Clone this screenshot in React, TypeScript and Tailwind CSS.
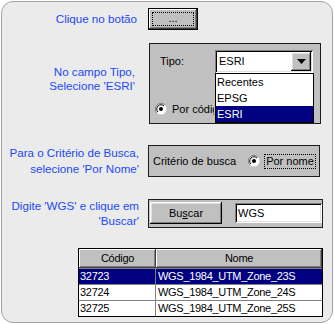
const raised =
  "bg-[#c0c0c0] shadow-[inset_-1px_-1px_0_#000,inset_1px_1px_0_#fff,inset_-2px_-2px_0_#808080,inset_2px_2px_0_#dfdfdf]"
const sunken =
  "bg-white shadow-[inset_1px_1px_0_#808080,inset_-1px_-1px_0_#fff,inset_2px_2px_0_#000,inset_-2px_-2px_0_#dfdfdf]"

function Radio() {
  return (
    <svg width="12" height="12" viewBox="0 0 12 12" className="shrink-0">
      <circle cx="6" cy="6" r="5.5" fill="#fff" />
      <path d="M10 2A5.5 5.5 0 0 0 2 10" fill="none" stroke="#808080" />
      <path d="M9 3A4.2 4.2 0 0 0 3 9" fill="none" stroke="#000" />
      <circle cx="6" cy="6" r="2" fill="#000" />
    </svg>
  )
}

export default function App() {
  return (
    <div className="w-[334px] h-[324px] bg-white p-px font-['Liberation_Sans',Arial,sans-serif] text-[11px] text-black">
      <div className="h-[322px] w-[332px] rounded-[12px] border border-[#a4a4a4] bg-[#ebebeb] pt-[6px]">
        {/* Step 1 */}
        <div className="flex items-center h-[22px]">
          <div className="w-[135px] text-right text-[11.6px] text-[#2049f5]">Clique no botão</div>
          <button className="ml-[11px] w-[50px] h-[22px] border border-black p-[3px] bg-[#c0c0c0] shadow-[inset_-1px_-1px_0_#404040,inset_1px_1px_0_#fff,inset_-2px_-2px_0_#808080]">
            <span className="flex h-full items-center justify-center border border-dotted border-black leading-none pb-[2px]">...</span>
          </button>
        </div>

        {/* Step 2 */}
        <div className="flex items-start mt-[13px]">
          <div className="w-[133px] pt-[22px] text-right text-[11.6px] leading-[14px] text-[#2049f5]">
            No campo Tipo,
            <br />
            Selecione 'ESRI'
          </div>
          <div className="relative ml-[14px] w-[172px] h-[81px] border border-[#1c1c1c] bg-[#c0c0c0]">
            <div className="flex items-center pt-[6px] pl-[10px]">
              <span className="w-[55px]">Tipo:</span>
              <div className={`flex w-[98px] h-[23px] items-center p-[2px] ${sunken}`}>
                <span className="flex-1 pl-[2px]">ESRI</span>
                <span className={`flex w-[20px] h-[19px] items-center justify-center ${raised}`}>
                  <svg width="9" height="5" viewBox="0 0 9 5">
                    <path d="M0 0h9L4.5 5z" fill="#000" />
                  </svg>
                </span>
              </div>
            </div>
            <div className="flex items-center gap-[5px] mt-[29px] pl-[5px] h-[14px]">
              <Radio />
              <span className="w-[42px] overflow-hidden whitespace-nowrap">Por código</span>
            </div>
            <div className="absolute left-[65px] top-[29px] z-10 w-[99px] border border-black bg-white">
              <div className="h-[16px] leading-[16px] pl-[1px]">Recentes</div>
              <div className="h-[16px] leading-[16px] pl-[1px]">EPSG</div>
              <div className="h-[16px] leading-[16px] pl-[1px] bg-[#000080] text-white">ESRI</div>
            </div>
          </div>
        </div>

        {/* Step 3 */}
        <div className="flex items-center mt-[21px]">
          <div className="w-[137px] text-right text-[11.6px] leading-[16px] text-[#2049f5]">
            Para o Critério de Busca,
            <br />
            selecione 'Por Nome'
          </div>
          <div className="flex items-center ml-[9px] w-[172px] h-[32px] border border-[#1c1c1c] bg-[#c0c0c0] pl-[4px]">
            <span>Critério de busca</span>
            <span className="ml-[12px]">
              <Radio />
            </span>
            <span className="ml-[4px] border border-dotted border-black px-[1px] leading-[13px]">Por nome</span>
          </div>
        </div>

        {/* Step 4 */}
        <div className="flex items-center mt-[21px]">
          <div className="w-[137px] text-right text-[11.6px] leading-[15px] text-[#2049f5]">
            Digite 'WGS' e clique em
            <br />
            'Buscar'
          </div>
          <div className="flex items-center ml-[9px] w-[175px] h-[29px] border border-[#1c1c1c] bg-[#c0c0c0] pl-px">
            <button className={`w-[72px] h-[22px] ${raised}`}>
              Bu<span className="underline">s</span>car
            </button>
            <div className={`ml-[13px] flex-1 h-[20px] leading-[20px] pl-[3px] ${sunken}`}>WGS</div>
          </div>
        </div>

        {/* Results */}
        <div className="mt-[20px] ml-[76px] w-[245px] border border-black bg-white tracking-[-0.3px]">
          <div className="flex h-[19px]">
            <div className="w-[77px] flex items-center justify-center bg-[#c0c0c0] shadow-[inset_-1px_-1px_0_#404040,inset_1px_1px_0_#fff,inset_-2px_-2px_0_#808080]">Código</div>
            <div className="flex-1 flex items-center justify-center bg-[#c0c0c0] shadow-[inset_-1px_-1px_0_#404040,inset_1px_1px_0_#fff,inset_-2px_-2px_0_#808080]">Nome</div>
          </div>
          {[
            ["32723", "WGS_1984_UTM_Zone_23S", true],
            ["32724", "WGS_1984_UTM_Zone_24S", false],
            ["32725", "WGS_1984_UTM_Zone_25S", false],
          ].map(([code, name, sel]) => (
            <div
              key={code as string}
              className={`flex h-[16px] leading-[15px] border-t border-[#808080] ${sel ? "bg-[#000080] text-white" : ""}`}
            >
              <div className="w-[77px] pl-px border-r border-[#808080]">{code}</div>
              <div className="flex-1 pl-[2px]">{name}</div>
            </div>
          ))}
        </div>
      </div>
    </div>
  )
}
